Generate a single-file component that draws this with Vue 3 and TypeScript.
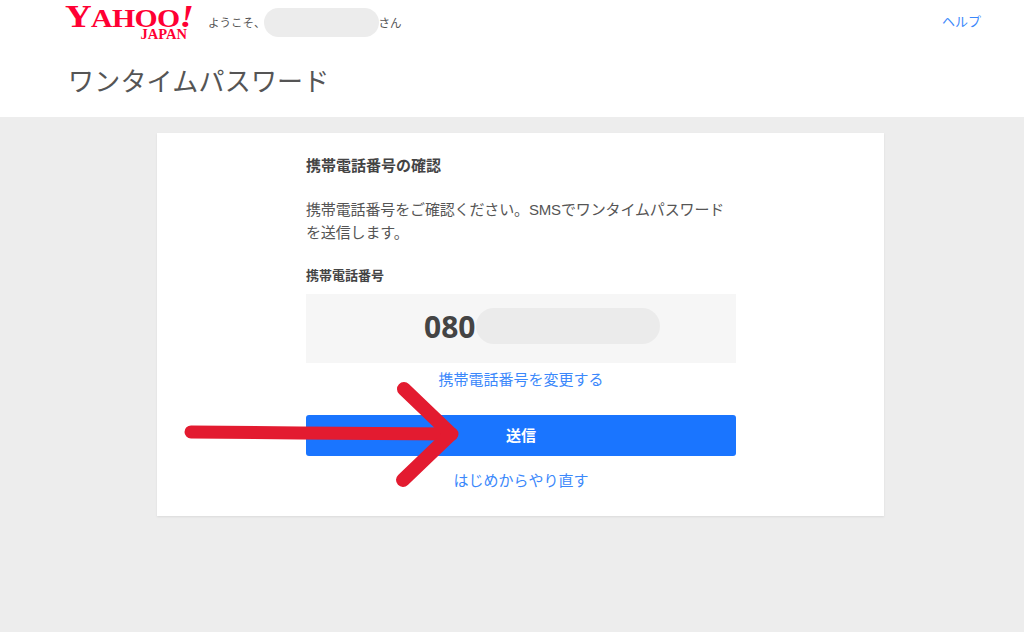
<script setup lang="ts">
const pageTitle: string = 'ワンタイムパスワード'
const phonePrefix: string = '080'
</script>

<template>
  <div class="page">
    <header class="header">
      <div class="top-row">
        <div class="logo" aria-label="Yahoo! Japan">
          <span class="logo-main"><span class="big">Y</span>AHOO<span class="big bang">!</span></span>
          <span class="logo-sub">JAPAN</span>
        </div>
        <div class="welcome">
          <span>ようこそ、</span>
          <span class="mask-name"></span>
          <span>さん</span>
        </div>
        <a class="help" href="#">ヘルプ</a>
      </div>
      <h1>{{ pageTitle }}</h1>
    </header>

    <main class="main">
      <section class="card">
        <div class="content">
          <h2>携帯電話番号の確認</h2>
          <p class="desc">携帯電話番号をご確認ください。SMSでワンタイムパスワードを送信します。</p>
          <div class="label">携帯電話番号</div>
          <div class="phone-box">
            <span class="phone">{{ phonePrefix }}</span>
            <span class="mask-phone"></span>
          </div>
          <a class="link change" href="#">携帯電話番号を変更する</a>
          <button class="send" type="button">送信</button>
          <a class="link restart" href="#">はじめからやり直す</a>
        </div>
      </section>
    </main>

    <!-- hand drawn arrow over the button -->
    <svg class="arrow" width="1024" height="632" viewBox="0 0 1024 632" aria-hidden="true">
      <g fill="none" stroke="#e31b30" stroke-linecap="round" stroke-linejoin="round">
        <path d="M191 432 L 300 433 L 452 434" stroke-width="13" />
        <path d="M404 389 L 451 434 L 403 480" stroke-width="14" />
      </g>
    </svg>
  </div>
</template>

<style scoped>
.page {
  position: relative;
  width: 1024px;
  height: 632px;
  overflow: hidden;
  background: #ededed;
  color: #444;
  font-family: "Liberation Sans", "Noto Sans CJK JP", sans-serif;
}

.header {
  height: 117px;
  background: #fff;
  padding-left: 65px;
  padding-right: 43px;
  box-sizing: border-box;
}

.top-row {
  display: flex;
  align-items: flex-start;
  height: 60px;
}

.logo {
  display: flex;
  flex-direction: column;
  align-items: flex-start;
  flex: none;
  width: 127px;
  padding-top: 1px;
  color: #ff0033;
  font-family: "Liberation Serif", serif;
  font-weight: 700;
  line-height: 1;
}

.logo-main {
  height: 27px;
  line-height: 31px;
  font-size: 25px;
  letter-spacing: -0.5px;
  white-space: nowrap;
  transform: scaleX(1.19);
  transform-origin: left center;
}

.logo-main .big {
  font-size: 31px;
}

.logo-main .bang {
  font-style: italic;
}

.logo-sub {
  align-self: flex-end;
  height: 12px;
  margin-right: 5px;
  font-size: 14.500px;
  line-height: 12px;
}

.welcome {
  display: flex;
  align-items: center;
  margin-left: 16px;
  height: 44px;
  font-size: 11.500px;
  color: #555;
  white-space: nowrap;
}

.mask-name {
  width: 115px;
  height: 29px;
  margin-left: -2px;
  border-radius: 15px;
  background: #ececec;
}

.help {
  margin-left: auto;
  line-height: 44px;
  font-size: 13px;
  color: #3b88fb;
  text-decoration: none;
}

h1 {
  margin: 4px 0 0 3px;
  font-size: 26px;
  line-height: 36px;
  font-weight: 400;
  letter-spacing: 0.2px;
  color: #555;
}

.main {
  display: flex;
  padding: 16px 140px 0 157px;
  box-sizing: border-box;
}

.card {
  width: 727px;
  height: 383px;
  flex: none;
  background: #fff;
  box-shadow: 0 1px 2px rgba(0, 0, 0, 0.08);
}

.content {
  display: flex;
  flex-direction: column;
  width: 430px;
  margin-left: 149px;
  padding-top: 24px;
}

h2 {
  margin: 0;
  font-size: 15px;
  line-height: 18px;
  font-weight: 700;
  color: #444;
}

.desc {
  margin: 24px 0 0;
  font-size: 15px;
  line-height: 22.500px;
  letter-spacing: -0.14px;
  color: #555;
}

.label {
  margin-top: 24px;
  font-size: 13px;
  line-height: 16px;
  font-weight: 700;
  color: #444;
}

.phone-box {
  display: flex;
  align-items: center;
  height: 69px;
  margin-top: 10px;
  padding-left: 118px;
  background: #f6f6f6;
}

.phone {
  width: 52px;
  margin-bottom: 4px;
  font-family: "Noto Sans", "Liberation Sans", sans-serif;
  font-size: 30px;
  font-weight: 700;
  color: #444;
}

.mask-phone {
  width: 184px;
  height: 36px;
  margin-bottom: 5px;
  border-radius: 18px;
  background: #ebebeb;
}

.link {
  align-self: center;
  font-size: 15px;
  line-height: 20px;
  color: #3b88fb;
  text-decoration: none;
}

.change {
  margin-top: 7px;
}

.send {
  height: 41px;
  margin-top: 25px;
  padding: 0 0 3px;
  border: 0;
  border-radius: 3px;
  background: #1a75ff;
  color: #fff;
  font-family: inherit;
  font-size: 15px;
  font-weight: 700;
}

.restart {
  margin-top: 15px;
}

.arrow {
  position: absolute;
  left: 0;
  top: 0;
  pointer-events: none;
}
</style>
